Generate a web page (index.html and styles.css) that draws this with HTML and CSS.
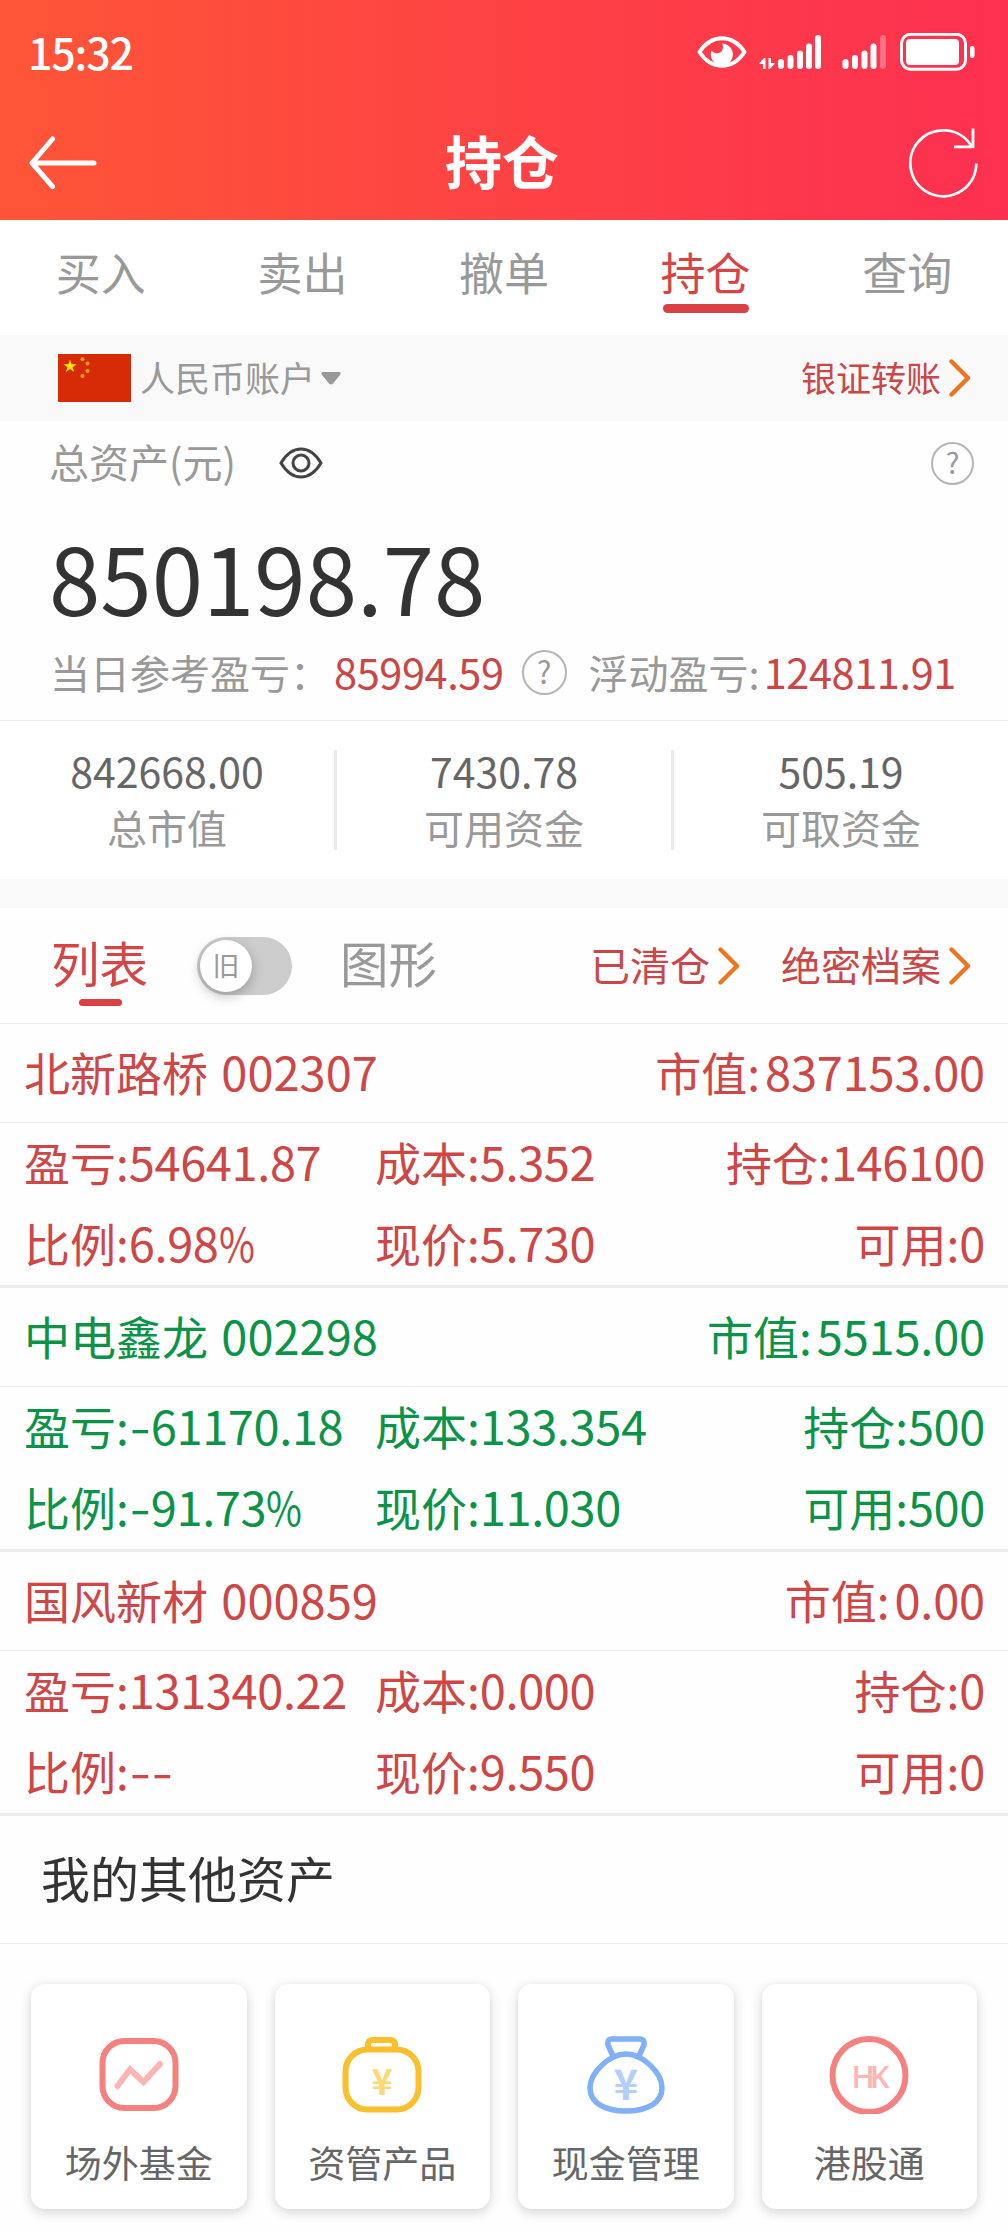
FILE: index.html
```
<!DOCTYPE html>
<html lang="zh-CN">
<head>
    <meta charset="UTF-8">
    <meta name="viewport" content="width=device-width, initial-scale=1.0">
    <title>持仓</title>
    <link rel="stylesheet" href="styles.css">
</head>
<body>
    <svg width="0" height="0" class="defs">
        <symbol id="chevron" viewBox="0 0 22 38"><path d="M2.5 2.5L19 19L2.5 35.5" fill="none" stroke="#ee7420" stroke-width="4.4" stroke-linecap="round" stroke-linejoin="round"/></symbol>
    </svg>

    <header class="header">
        <div class="status">
            <div class="time">15:32</div>
            <svg class="status-icons" width="280" height="40" viewBox="0 0 280 40" fill="#fff">
                <path d="M2.500 19C9 9 17 5.200 25 5.200S41 9 47.500 19C41 29 33 32.800 25 32.800S9 29 2.500 19Z" fill="none" stroke="#fff" stroke-width="4" stroke-linejoin="round"/>
                <path d="M25 10.500A11 11 0 1 1 14.600 17.500A5.800 5.800 0 1 0 25 10.500Z"/>
                <path d="M68.500 36V25H67L62.500 30V31H66V36ZM71.500 25V36H73L77.500 31V30H74V25Z"/>
                <rect x="81" y="26" width="6" height="10" rx="3"/>
                <rect x="90.500" y="22" width="6" height="14" rx="3"/>
                <rect x="100" y="17.500" width="6" height="18.500" rx="3"/>
                <rect x="109" y="10.500" width="6" height="25.500" rx="3"/>
                <rect x="118" y="2" width="6" height="34" rx="3"/>
                <rect x="145.500" y="26" width="6" height="10" rx="3"/>
                <rect x="155" y="22" width="6" height="14" rx="3"/>
                <rect x="164.500" y="17.500" width="6" height="18.500" rx="3"/>
                <rect x="173.500" y="10.500" width="6" height="25.500" rx="3"/>
                <rect x="183" y="2" width="6" height="34" rx="3" opacity=".3"/>
                <rect x="204.500" y="1.300" width="64" height="35" rx="9" fill="none" stroke="#fff" stroke-width="3"/>
                <rect x="209" y="6" width="53" height="26" rx="4"/>
                <rect x="273" y="13" width="4.500" height="12" rx="2.200"/>
            </svg>
        </div>
        <div class="nav">
            <svg width="70" height="54" viewBox="0 0 70 54" fill="none" stroke="#fff" stroke-width="5" stroke-linecap="round" stroke-linejoin="round"><path d="M25.500 3L5 27L25.500 50.500M5 27H67"/></svg>
            <h1>持仓</h1>
            <svg width="72" height="72" viewBox="0 0 72 72" fill="none" stroke="#fff" stroke-width="2.800"><path d="M69.300 36.500A33 33 0 1 1 65 20M66 1.500V19.800H47"/></svg>
        </div>
    </header>

    <nav class="tabs">
        <div class="tab">买入</div>
        <div class="tab">卖出</div>
        <div class="tab">撤单</div>
        <div class="tab active">持仓</div>
        <div class="tab">查询</div>
    </nav>

    <div class="account">
        <svg class="flag" width="73" height="48" viewBox="0 0 73 48">
            <rect width="73" height="48" fill="#d72a07"/>
            <path fill="#ffe600" d="M12 5.500L13.600 10.200H18.600L14.600 13.200L16.100 18L12 15.100L7.900 18L9.400 13.200L5.400 10.200H10.400Z"/>
            <g fill="#f5a51c"><circle cx="24.500" cy="5.300" r="2"/><circle cx="29.500" cy="9.500" r="2"/><circle cx="29.500" cy="17" r="2"/><circle cx="24.500" cy="22" r="2"/></g>
        </svg>
        <span>人民币账户</span>
        <svg class="caret" width="20" height="13" viewBox="0 0 20 13"><path d="M1.500 0H18.500Q20.500 1 19 3L12 11.500Q10 13.500 8 11.500L1 3Q-.5 1 1.500 0Z" fill="#999"/></svg>
        <a class="link"><b>银证转账</b><svg class="chevron"><use href="#chevron"/></svg></a>
    </div>

    <section class="assets">
        <div class="assets-title">
            <span>总资产(元)</span>
            <svg class="eye" width="44" height="32" viewBox="0 0 44 32" fill="none" stroke="#444" stroke-width="3"><path d="M2 16C8 6 15 2 22 2S36 6 42 16C36 26 29 30 22 30S8 26 2 16Z"/><circle cx="22" cy="16" r="8"/></svg>
            <span class="help small">?</span>
        </div>
        <div class="total">850198.78</div>
        <div class="profit">
            <span>当日参考盈亏：</span>
            <span class="value">85994.59</span>
            <span class="help">?</span>
            <span>浮动盈亏:</span>
            <span class="value float">124811.91</span>
        </div>
    </section>

    <section class="stats">
        <div class="stat"><b>842668.00</b><span>总市值</span></div>
        <div class="stat"><b>7430.78</b><span>可用资金</span></div>
        <div class="stat"><b>505.19</b><span>可取资金</span></div>
    </section>

    <div class="list-head">
        <div class="view active">列表</div>
        <div class="switch"><div class="knob">旧</div></div>
        <div class="view">图形</div>
        <a class="link first"><b>已清仓</b><svg class="chevron"><use href="#chevron"/></svg></a>
        <a class="link"><b>绝密档案</b><svg class="chevron"><use href="#chevron"/></svg></a>
    </div>

    <div class="stock red">
        <div class="stock-head"><span>北新路桥 <i class="code">002307</i></span><span>市值:<i class="market">837153.00</i></span></div>
        <div class="stock-info">
            <span>盈亏:<i>54641.87</i></span><span>成本:<i>5.352</i></span><span>持仓:<i>146100</i></span>
            <span>比例:<i>6.98<em>%</em></i></span><span>现价:<i>5.730</i></span><span>可用:<i>0</i></span>
        </div>
    </div>

    <div class="stock green">
        <div class="stock-head"><span>中电鑫龙 <i class="code">002298</i></span><span>市值:<i class="market">5515.00</i></span></div>
        <div class="stock-info">
            <span>盈亏:<i><u>-</u>61170.18</i></span><span>成本:<i>133.354</i></span><span>持仓:<i>500</i></span>
            <span>比例:<i><u>-</u>91.73<em>%</em></i></span><span>现价:<i>11.030</i></span><span>可用:<i>500</i></span>
        </div>
    </div>

    <div class="stock red">
        <div class="stock-head"><span>国风新材 <i class="code">000859</i></span><span>市值:<i class="market">0.00</i></span></div>
        <div class="stock-info">
            <span>盈亏:<i>131340.22</i></span><span>成本:<i>0.000</i></span><span>持仓:<i>0</i></span>
            <span>比例:<i><u>-</u><u>-</u></i></span><span>现价:<i>9.550</i></span><span>可用:<i>0</i></span>
        </div>
    </div>

    <h2 class="other-title">我的其他资产</h2>

    <div class="cards">
        <div class="card">
            <svg width="80" height="80" viewBox="0 0 80 80" fill="none" stroke-linecap="round" stroke="#f58080" stroke-width="6">
                <rect x="3.500" y="7" width="73" height="67" rx="22"/>
                <path d="M18.500 52L31 35.500L44.500 48L61 30" stroke="#fbb5b5"/>
            </svg>
            <span>场外基金</span>
        </div>
        <div class="card">
            <svg width="80" height="80" viewBox="0 0 80 80" fill="none" stroke="#f9bf2c" stroke-width="6">
                <rect x="3.500" y="15.500" width="73" height="60" rx="22"/>
                <path d="M26 15V11Q26 6 31 6H48Q53 6 53 11V15"/>
                <text x="40" y="61" fill="#fcd976">¥</text>
            </svg>
            <span>资管产品</span>
        </div>
        <div class="card">
            <svg width="80" height="80" viewBox="0 0 80 80" fill="none" stroke="#7fb0f8" stroke-width="5.500">
                <path d="M40 20C57 20 76 39 76 54C76 69 61 77 40 77S4 69 4 54C4 39 23 20 40 20Z"/>
                <path d="M27 22L22 11Q21 5 26 5H54Q59 5 58 11L53 22"/>
                <text x="40" y="66" fill="#b3d0fc" class="big">¥</text>
            </svg>
            <span>现金管理</span>
        </div>
        <div class="card">
            <svg width="80" height="80" viewBox="0 0 80 80" fill="none" stroke="#f58080" stroke-width="6">
                <circle cx="40" cy="41.500" r="36.500"/>
                <text x="39" y="54" fill="#fbb5b5" class="hk">HK</text>
            </svg>
            <span>港股通</span>
        </div>
    </div>
</body>
</html>
```
FILE: styles.css
```
* {
    margin: 0;
    padding: 0;
    box-sizing: border-box;
}

body {
    width: 1008px;
    height: 2232px;
    overflow: hidden;
    background: #fefefe;
    color: #999;
    font-family: 'Noto Sans CJK SC', 'Noto Sans', sans-serif;
    font-size: 40px;
    line-height: 1;
    white-space: nowrap;
}

svg {
    display: block;
    flex-shrink: 0;
}

.defs {
    display: none;
}

i, u, em {
    font-style: normal;
    text-decoration: none;
}

/* Header */
.header {
    height: 220px;
    background: linear-gradient(90deg, #fe5537, #fd3050);
    color: white;
}

.status {
    display: flex;
    justify-content: space-between;
    align-items: center;
    height: 108px;
    padding: 0 31px 0 28px;
}

.time {
    font-size: 43px;
    font-weight: 500;
    letter-spacing: -1.2px;
    padding-bottom: 5px;
}

.status-icons {
    margin-bottom: 2px;
}

.nav {
    display: flex;
    justify-content: space-between;
    align-items: center;
    height: 110px;
    padding: 0 29px 0 27px;
}

.nav h1 {
    font-size: 57px;
    font-weight: 700;
    padding-bottom: 7px;
}

/* Tabs */
.tabs {
    display: flex;
    height: 115px;
    padding-top: 29px;
    background: white;
}

.tab {
    flex: 1;
    display: flex;
    flex-direction: column;
    align-items: center;
    font-size: 45px;
}

.tab.active {
    color: #d64545;
}

.tab.active::after {
    content: "";
    width: 86px;
    height: 9px;
    margin-top: 10px;
    border-radius: 5px;
    background: #d94144;
}

/* Account */
.account {
    display: flex;
    align-items: center;
    height: 86px;
    padding: 0 37px 0 58px;
    background: #f9f9f9;
    font-size: 35px;
}

.account span {
    margin: 0 6px 0 9px;
    padding-bottom: 4px;
}

.link {
    display: flex;
    align-items: center;
    color: #cb4747;
}

.link b {
    font-weight: 400;
    padding-bottom: 4px;
}

.account .link {
    margin-left: auto;
}

.chevron {
    width: 22px;
    height: 38px;
    margin-left: 8px;
}

/* Assets */
.assets {
    height: 300px;
    border-bottom: 1px solid #eaeaea;
}

.assets-title {
    display: flex;
    align-items: center;
    height: 84px;
    padding: 0 34px 0 49px;
}

.assets-title > span:first-child {
    padding-bottom: 5px;
}

.eye {
    margin-left: 43px;
}

.help {
    display: flex;
    justify-content: center;
    align-items: center;
    width: 45px;
    height: 45px;
    border: 2px solid #b5b5b5;
    border-radius: 50%;
    font-size: 31px;
    padding-bottom: 3px;
}

.help.small {
    width: 43px;
    height: 43px;
    margin-left: auto;
    font-size: 29px;
}

.total {
    height: 132px;
    padding-left: 49px;
    color: #333;
    font-size: 92.5px;
    line-height: 143px;
}

.profit {
    display: flex;
    align-items: center;
    height: 70px;
    padding-left: 50px;
}

.profit .value {
    color: #cb4747;
    font-size: 41.5px;
    letter-spacing: -0.4px;
    margin-left: 4px;
}

.profit .help {
    margin: 0 22px 0 18px;
}

/* Totals */
.stats {
    display: flex;
    align-items: center;
    height: 158px;
    background: white;
}

.stat {
    flex: 1;
    display: flex;
    flex-direction: column;
    align-items: center;
    height: 100px;
    border-right: 3px solid #eaeaea;
}

.stat:last-child {
    border: none;
}

.stat b {
    color: #666;
    font-size: 41px;
    font-weight: 400;
    margin-bottom: 16px;
}

/* List header */
.list-head {
    display: flex;
    align-items: center;
    height: 145px;
    padding: 0 37px 0 51px;
    border-top: 29px solid #f9f9f9;
    border-bottom: 1px solid #eaeaea;
}

.view {
    font-size: 48.5px;
    padding-bottom: 6px;
}

.view.active {
    position: relative;
    color: #d64545;
}

.view.active::after {
    content: "";
    position: absolute;
    left: 28px;
    bottom: -13px;
    width: 43px;
    height: 7px;
    border-radius: 4px;
    background: #d94144;
}

.switch {
    width: 95px;
    height: 58px;
    margin: 0 48px 0 49px;
    padding: 3px;
    border-radius: 29px;
    background: #ccc;
}

.knob {
    width: 52px;
    height: 52px;
    border-radius: 50%;
    background: white;
    box-shadow: 0 4px 12px rgba(0, 0, 0, 0.25);
    font-size: 27px;
    line-height: 49px;
    text-align: center;
}

.list-head .first {
    margin-left: auto;
    margin-right: 41px;
}

/* Stocks */
.stock {
    height: 264px;
    border-bottom: 3px solid #ededed;
    font-size: 46px;
}

.stock i {
    font-size: 47px;
    letter-spacing: -0.4px;
}

.stock u {
    display: inline-block;
    width: 22px;
    text-align: center;
    transform: scaleX(1.3);
}

/* narrow percent sign */
.stock em {
    display: inline-block;
    width: 36px;
    transform: scaleX(0.83);
    transform-origin: left;
}

.stock .code {
    margin-left: 3px;
    letter-spacing: 0;
}

.stock .market {
    margin-left: 5px;
    letter-spacing: -0.2px;
}

.red {
    color: #cf4646;
}

.green {
    color: #0b9448;
}

.stock-head {
    display: flex;
    justify-content: space-between;
    align-items: center;
    height: 99px;
    padding: 0 23px 5px 24px;
    border-bottom: 1px solid #eaeaea;
}

.stock-info {
    display: grid;
    grid-template-columns: 351px 1fr auto;
    grid-template-rows: 81px 81px;
    padding: 0 23px 0 24px;
    line-height: 76px;
}

.stock-info span:nth-child(3n) {
    text-align: right;
}

/* Other assets */
.other-title {
    height: 128px;
    padding-left: 41px;
    border-bottom: 1px solid #eaeaea;
    color: #333;
    font-size: 49px;
    font-weight: 400;
    line-height: 122px;
}

.cards {
    display: grid;
    grid-template-columns: repeat(4, 1fr);
    gap: 28px;
    padding: 40px 31px 0;
}

.card {
    display: flex;
    flex-direction: column;
    align-items: center;
    height: 225px;
    padding-top: 50px;
    border-radius: 14px;
    background: white;
    box-shadow: 0 3px 12px rgba(0, 0, 0, 0.18);
    color: #666;
    font-size: 37px;
}

.card span {
    margin-top: 30px;
}

.card text {
    stroke: none;
    font-size: 36px;
    font-weight: 700;
    text-anchor: middle;
}

.card .big {
    font-size: 42px;
}

.card .hk {
    font-family: 'Open Sans', sans-serif;
    font-size: 31px;
    font-weight: 600;
    letter-spacing: -5px;
}
```
